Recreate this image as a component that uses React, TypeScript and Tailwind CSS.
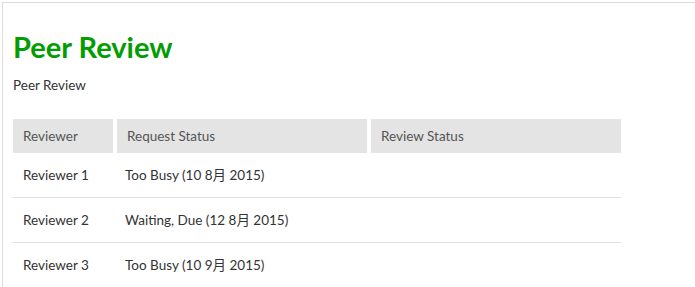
import React from 'react';

const ROWS = [
  { reviewer: 'Reviewer 1', request: 'Too Busy (10 8月 2015)', review: '' },
  { reviewer: 'Reviewer 2', request: 'Waiting, Due (12 8月 2015)', review: '' },
  { reviewer: 'Reviewer 3', request: 'Too Busy (10 9月 2015)', review: '' },
];

const App: React.FC = () => {
  return (
    <div
      className="w-[695px] h-[287px] overflow-hidden bg-white pt-[2px] pl-[2px]"
      style={{ fontFamily: '"Lato", "Noto Sans CJK SC", sans-serif' }}
    >
      <div className="h-full border-t border-l border-[#dcdcdc] pl-[10px] pt-[27px]">
        <h1 className="text-[29px] leading-[34px] font-bold text-[#029d02]">Peer Review</h1>
        <p className="mt-[12px] text-[13.5px] leading-[18px] text-[#333]">Peer Review</p>

        <div className="mt-[25px] w-[608px] text-[13.5px]">
          <div className="flex gap-[4px] text-[#555]">
            <div className="w-[100px] h-[34px] bg-[#e4e4e4] pl-[10px] flex items-center">Reviewer</div>
            <div className="w-[250px] h-[34px] bg-[#e4e4e4] pl-[10px] flex items-center">Request Status</div>
            <div className="flex-1 h-[34px] bg-[#e4e4e4] pl-[10px] flex items-center">Review Status</div>
          </div>
          {ROWS.map((row, i) => (
            <div
              key={row.reviewer}
              className={`flex h-[45px] items-center text-[#333] ${i < ROWS.length - 1 ? 'border-b border-[#dddddd]' : ''}`}
            >
              <div className="w-[112px] pl-[10px]">{row.reviewer}</div>
              <div className="w-[254px]">{row.request}</div>
              <div className="flex-1">{row.review}</div>
            </div>
          ))}
        </div>
      </div>
    </div>
  );
};

export default App;
